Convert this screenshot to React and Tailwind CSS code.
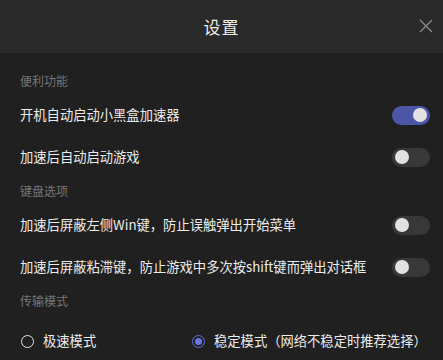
import { useState } from 'react';

function Toggle({ on, onChange }) {
  return (
    <button
      onClick={onChange}
      className={`relative w-[38px] h-[19px] rounded-full shrink-0 transition ${on ? 'bg-[#4b57a6]' : 'bg-[#383838]'}`}
    >
      <span
        className={`absolute top-[2.5px] w-[14px] h-[14px] rounded-full bg-[#e2e2e2] transition-all ${on ? 'left-[21px]' : 'left-[3px]'}`}
      />
    </button>
  );
}

function Radio({ checked }) {
  return checked ? (
    <span className="w-[13px] h-[13px] rounded-full border-[1.5px] border-[#5f6ee0] flex items-center justify-center shrink-0">
      <span className="w-[7px] h-[7px] rounded-full bg-[#6876e6]" />
    </span>
  ) : (
    <span className="w-[13px] h-[13px] rounded-full border-[1.5px] border-[#e6e6e6] shrink-0" />
  );
}

export default function App() {
  const [opts, setOpts] = useState({ autoStart: true, autoGame: false, win: false, sticky: false });
  const [mode, setMode] = useState('stable');
  const flip = (k) => setOpts((o) => ({ ...o, [k]: !o[k] }));

  const font = "font-['Noto_Sans_CJK_SC','Noto_Sans',sans-serif]";

  return (
    <div className={`w-[443px] h-[360px] bg-[#202020] overflow-hidden ${font}`}>
      {/* 标题栏 */}
      <div className="h-[53px] bg-[#2a2a2a] relative flex items-center justify-center">
        <span className="text-[17px] text-[#ececec] tracking-[1px]">设置</span>
        <button className="absolute right-[9px] top-[18px] p-[1px]">
          <svg width="14" height="14" viewBox="0 0 14 14" fill="none" stroke="#8c8c8c" strokeWidth="1.3">
            <path d="M1 1L13 13M13 1L1 13" />
          </svg>
        </button>
      </div>

      <div className="pl-[20px] pr-[13px] pt-[15px] text-[13.3px]">
        <div className="h-[26px] flex items-center text-[12px] text-[#767676]">便利功能</div>
        <div className="h-[42px] flex items-center justify-between text-[#ececec]">
          <span>开机自动启动小黑盒加速器</span>
          <Toggle on={opts.autoStart} onChange={() => flip('autoStart')} />
        </div>
        <div className="h-[42px] flex items-center justify-between text-[#ececec]">
          <span>加速后自动启动游戏</span>
          <Toggle on={opts.autoGame} onChange={() => flip('autoGame')} />
        </div>

        <div className="h-[26px] flex items-center text-[12px] text-[#767676]">键盘选项</div>
        <div className="h-[42px] flex items-center justify-between text-[#ececec]">
          <span>加速后屏蔽左侧Win键，防止误触弹出开始菜单</span>
          <Toggle on={opts.win} onChange={() => flip('win')} />
        </div>
        <div className="h-[42px] flex items-center justify-between text-[#ececec]">
          <span>加速后屏蔽粘滞键，防止游戏中多次按shift键而弹出对话框</span>
          <Toggle on={opts.sticky} onChange={() => flip('sticky')} />
        </div>

        <div className="h-[26px] flex items-center text-[12px] text-[#767676]">传输模式</div>
        <div className="h-[42px] mt-[6px] flex items-center text-[#ececec]">
          <button onClick={() => setMode('fast')} className="w-[172px] flex items-center gap-[9px] pl-[1px]">
            <Radio checked={mode === 'fast'} />
            <span>极速模式</span>
          </button>
          <button onClick={() => setMode('stable')} className="flex items-center gap-[9px]">
            <Radio checked={mode === 'stable'} />
            <span>稳定模式（网络不稳定时推荐选择）</span>
          </button>
        </div>
      </div>
    </div>
  );
}
